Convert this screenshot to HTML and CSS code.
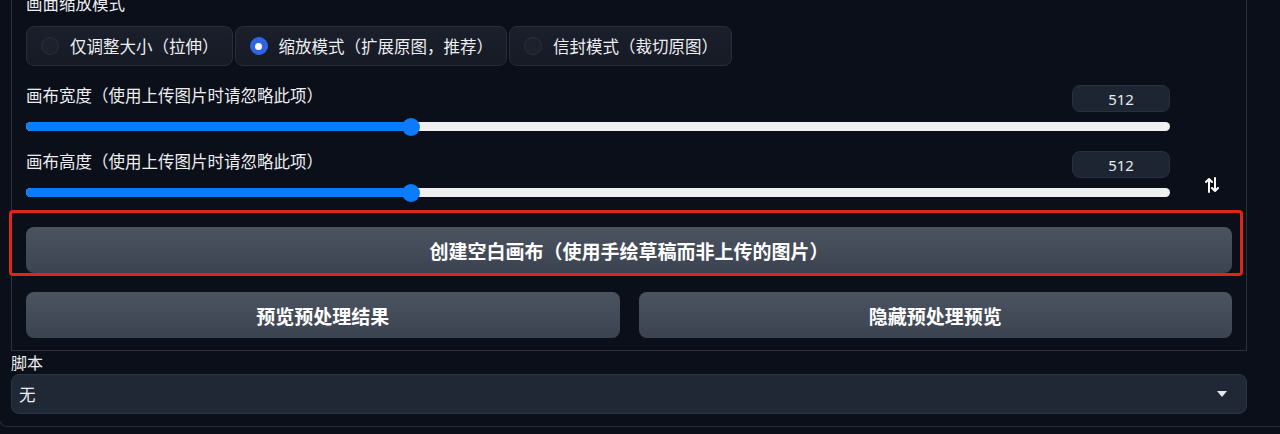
FILE: index.html
```html
<!DOCTYPE html>
<html lang="zh-CN">
<head>
<meta charset="utf-8">
<title>画布设置</title>
<link rel="stylesheet" href="styles.css">
</head>
<body>
<div class="outer">
  <div class="panel">
    <div class="label">画面缩放模式</div>
    <div class="radio-row">
      <label class="radio-item"><span class="radio"></span><span>仅调整大小（拉伸）</span></label>
      <label class="radio-item"><span class="radio checked"></span><span>缩放模式（扩展原图，推荐）</span></label>
      <label class="radio-item"><span class="radio"></span><span>信封模式（裁切原图）</span></label>
    </div>
    <div class="size-row">
      <div class="sliders">
        <div class="slider">
          <div class="slider-head">
            <span class="slider-label">画布宽度（使用上传图片时请忽略此项）</span>
            <span class="num">512</span>
          </div>
          <div class="track"><div class="fill" style="width:33.65%"><span class="thumb"></span></div></div>
        </div>
        <div class="slider second">
          <div class="slider-head">
            <span class="slider-label">画布高度（使用上传图片时请忽略此项）</span>
            <span class="num">512</span>
          </div>
          <div class="track"><div class="fill" style="width:33.65%"><span class="thumb"></span></div></div>
        </div>
      </div>
      <div class="swap-col">
        <svg class="swap" width="14" height="16" viewBox="0 0 14 16" fill="none" stroke="#ffffff" stroke-width="2" stroke-linecap="round" stroke-linejoin="round">
          <path d="M4 15V2M1 5L4 2L7 5"/>
          <path d="M10 1V14M7 11L10 14L13 11"/>
        </svg>
      </div>
    </div>
    <div class="highlight-wrap">
      <button class="btn">创建空白画布（使用手绘草稿而非上传的图片）</button>
      <div class="highlight"></div>
    </div>
    <div class="btn-row">
      <button class="btn">预览预处理结果</button>
      <button class="btn">隐藏预处理预览</button>
    </div>
  </div>
  <div class="script-label">脚本</div>
  <div class="dropdown">
    <span>无</span>
    <svg class="caret" width="10" height="6" viewBox="0 0 10 6"><path d="M0 0H10L5 6Z" fill="#e5e7eb"/></svg>
  </div>
</div>
</body>
</html>
```

FILE: styles.css
```css
html, body {
  margin: 0;
  padding: 0;
  background: #0b0f19;
  overflow: hidden;
}
body {
  width: 1280px;
  height: 434px;
  font-family: "Noto Sans CJK SC", "Noto Sans", sans-serif;
  color: #eceef1;
  font-size: 16.5px;
}
.outer {
  width: 1300px;
  box-sizing: border-box;
  margin-left: -1px;
  border: 1px solid #262c38;
  border-top: none;
  border-radius: 0 0 8px 8px;
  padding: 0 0 12px 11px;
}
.panel {
  width: 1236px;
  box-sizing: border-box;
  margin-top: -8px;
  border: 1px solid #2c323d;
  border-top: none;
  padding: 0 14px 12px 14px;
}
.label {
  line-height: 22px;
  margin-bottom: 12px;
}
.radio-row {
  display: flex;
  gap: 2px;
}
.radio-item {
  display: flex;
  align-items: center;
  height: 40px;
  box-sizing: border-box;
  padding: 0 13px 0 14px;
  border: 1px solid #272d3a;
  border-radius: 8px;
  background: linear-gradient(to bottom, #1a1f2b, #151a25);
  gap: 11px;
  line-height: 1;
}
.radio {
  width: 18px;
  height: 18px;
  border-radius: 50%;
  box-sizing: border-box;
  background: #1c212d;
  border: 1px solid #2a3040;
  flex: none;
}
.radio.checked {
  background: #2f65e3;
  border-color: #2f65e3;
  position: relative;
}
.radio.checked::after {
  content: "";
  position: absolute;
  width: 7px;
  height: 7px;
  border-radius: 50%;
  background: #ffffff;
  left: 4.5px;
  top: 4.5px;
}
.size-row {
  display: flex;
  margin-top: 19px;
}
.sliders {
  width: 1144px;
  flex: none;
}
.swap-col {
  flex: 1;
  display: flex;
  justify-content: flex-end;
  align-items: flex-end;
  padding: 0 13px 4px 0;
}
.slider.second {
  margin-top: 20px;
}
.slider-head {
  display: flex;
  justify-content: space-between;
  align-items: center;
  height: 27px;
}
.slider-label {
  line-height: 22px;
  margin-top: -7px;
}
.num {
  width: 98px;
  height: 27px;
  box-sizing: border-box;
  background: #1e2532;
  border: 1px solid #283040;
  border-radius: 8px;
  display: flex;
  align-items: center;
  justify-content: center;
  font-family: "Noto Sans", sans-serif;
  font-size: 15px;
  color: #e8eaed;
}
.track {
  margin-top: 10px;
  height: 9px;
  border-radius: 5px;
  background: #efefef;
}
.fill {
  height: 100%;
  border-radius: 5px;
  background: #0b7bff;
  position: relative;
}
.thumb {
  position: absolute;
  right: -9px;
  top: -4.5px;
  width: 18px;
  height: 18px;
  border-radius: 50%;
  background: #0b7bff;
}
.highlight-wrap {
  position: relative;
  margin-top: 30px;
}
.highlight {
  position: absolute;
  top: -17px;
  left: -17px;
  right: -11px;
  bottom: -3px;
  border: 3px solid #e3241b;
  border-radius: 4px;
  pointer-events: none;
}
.btn {
  display: block;
  width: 100%;
  height: 46px;
  border: none;
  border-radius: 8px;
  background: linear-gradient(to bottom, #4b5361, #3c4350);
  color: #ffffff;
  font-family: "Noto Sans CJK SC", sans-serif;
  font-size: 19px;
  font-weight: 700;
  padding: 0;
}
.btn-row {
  display: grid;
  grid-template-columns: 1fr 1fr;
  gap: 19px;
  margin-top: 19px;
}
.script-label {
  line-height: 23px;
  font-size: 16px;
}
.dropdown {
  width: 1236px;
  height: 40px;
  box-sizing: border-box;
  background: #202836;
  border: 1px solid #2d3544;
  border-radius: 8px;
  display: flex;
  align-items: center;
  justify-content: space-between;
  padding: 0 19px 0 7px;
}
.caret {
  display: block;
}
```
